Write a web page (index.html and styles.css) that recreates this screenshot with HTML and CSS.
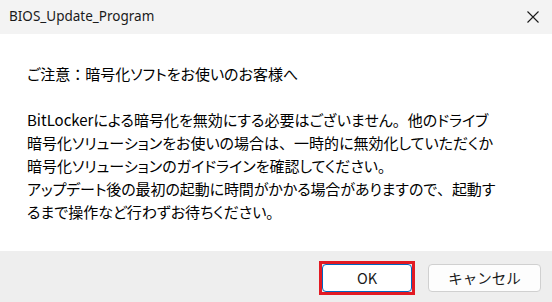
FILE: index.html
```html
<!DOCTYPE html>
<html lang="ja">
<head>
<meta charset="utf-8">
<link rel="stylesheet" href="styles.css">
</head>
<body>
<div class="dialog">
  <div class="titlebar">
    <span class="title">BIOS_Update_Program</span>
    <span class="close" aria-label="閉じる">
      <svg width="12" height="12" viewBox="0 0 12 12"><path d="M0.5 0.5 L11.5 11.5 M11.5 0.5 L0.5 11.5" stroke="#1a1a1a" stroke-width="1.1" fill="none"/></svg>
    </span>
  </div>
  <div class="content">
    <p>ご注意<span class="fw">：</span>暗号化ソフトをお使いのお客様へ</p>
    <p class="blank">&nbsp;</p>
    <p>BitLockerによる暗号化を無効にする必要はございません<span class="fw">。</span>他のドライブ<br>暗号化ソリューションをお使いの場合は<span class="fw">、</span>一時的に無効化していただくか<br>暗号化ソリューションのガイドラインを確認してください<span class="fw">。</span><br><span class="tight">アップデート後の最初の起動に時間がかかる場合がありますので<span class="fw">、</span>起動す</span><br>るまで操作など行わずお待ちください<span class="fw">。</span></p>
  </div>
  <div class="footer">
    <span class="highlight"><button class="btn btn-ok">OK</button></span>
    <button class="btn btn-cancel">キャンセル</button>
  </div>
</div>
</body>
</html>
```
FILE: styles.css
```css
* { box-sizing: border-box; }
html, body { margin: 0; padding: 0; }
body {
  width: 552px;
  height: 302px;
  background: #ffffff;
  font-family: "Noto Sans CJK JP", "Noto Sans", sans-serif;
  color: #000;
  overflow: hidden;
}
.dialog {
  display: flex;
  flex-direction: column;
  height: 302px;
}
.titlebar {
  height: 34px;
  background: #f3f3f3;
  display: flex;
  align-items: center;
  justify-content: space-between;
  padding: 0 13px 0 9px;
}
.title {
  font-family: "Noto Sans", sans-serif;
  font-size: 13.5px;
  color: #1a1a1a;
  position: relative;
  top: -1px;
}
.close {
  display: flex;
  width: 12px;
  height: 12px;
}
.content {
  height: 217px;
  padding: 28px 0 0 27px;
  font-size: 15px;
  line-height: 23px;
  font-feature-settings: "palt";
}
.content p { margin: 0; white-space: nowrap; }
.fw { font-feature-settings: normal; }
.tight { letter-spacing: -0.1px; }
.footer {
  flex: 1;
  background: #eeeeee;
  display: flex;
  justify-content: flex-end;
  align-items: flex-start;
  gap: 13px;
  padding: 10px 11px 0 0;
}
.highlight {
  display: flex;
  border: 3px solid #e21a23;
}
.btn {
  height: 28px;
  border: 1px solid #d0d0d0;
  border-radius: 4px;
  background: #fdfdfd;
  font-family: "Noto Sans CJK JP", "Noto Sans", sans-serif;
  font-size: 14.5px;
  color: #1a1a1a;
  padding: 0;
  width: 113px;
  line-height: 1;
}
.btn-cancel { margin-top: 3px; }
.btn-ok {
  width: 90px;
  background: #ffffff;
  border: 1.5px solid #0067c0;
}
```
